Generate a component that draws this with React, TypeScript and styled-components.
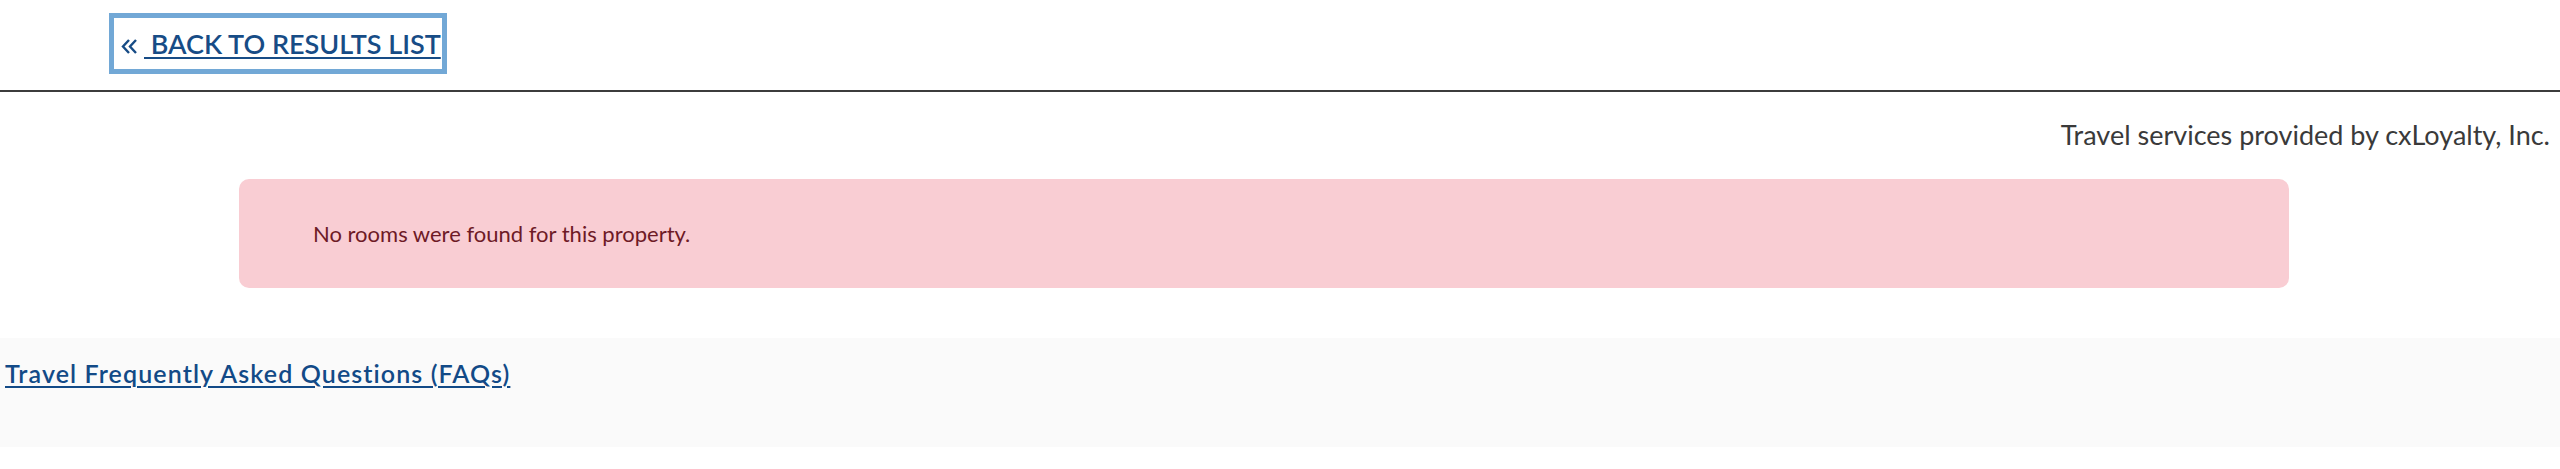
import React from 'react';
import styled, { createGlobalStyle } from 'styled-components';

const GlobalStyle = createGlobalStyle`
  html, body {
    margin: 0;
    padding: 0;
    background: #ffffff;
    font-family: Lato, "Liberation Sans", Arial, sans-serif;
  }
`;

const Page = styled.div`
  width: 2560px;
  min-height: 469px;
  background: #fff;
`;

const TopBar = styled.div`
  height: 92px;
  padding: 13px 0 0 109px;
  box-sizing: border-box;
  border-bottom: 2px solid #3c3c3c;
`;

const BackLink = styled.a`
  display: inline-flex;
  align-items: center;
  height: 61px;
  box-sizing: border-box;
  padding: 0 1px 0 7px;
  border: 5px solid #72a8d6;
  color: #174c86;
  font-size: 27px;
  font-weight: 600;
  letter-spacing: 0;
  text-transform: uppercase;
  text-decoration: none;
  cursor: pointer;
`;

const Chevron = styled.svg`
  width: 17px;
  height: 15px;
  margin: 6px 6px 0 0;
  flex-shrink: 0;
`;

const LinkLabel = styled.span`
  text-decoration: underline;
  text-decoration-thickness: 2px;
  text-underline-offset: 3px;
  white-space: pre;
`;

const Provider = styled.div`
  text-align: right;
  padding: 26px 10px 0 0;
  color: #3a3a3a;
  font-size: 27px;
  line-height: 34px;
`;

const AlertWrap = styled.div`
  padding: 27px 0 0 239px;
`;

const Alert = styled.div`
  width: 2050px;
  height: 109px;
  box-sizing: border-box;
  display: flex;
  align-items: center;
  padding-left: 74px;
  background: #f9cdd3;
  border-radius: 10px;
  color: #6e1a26;
  font-size: 22px;
`;

const FaqSection = styled.div`
  margin-top: 50px;
  height: 109px;
  background: #fafafa;
  padding: 20px 0 0 5px;
  box-sizing: border-box;
`;

const FaqLink = styled.a`
  color: #124a87;
  font-size: 25px;
  font-weight: 600;
  letter-spacing: 1.1px;
  text-decoration: underline;
  text-decoration-thickness: 2px;
  text-underline-offset: 3px;
  cursor: pointer;
`;

export default function App() {
  return (
    <Page>
      <GlobalStyle />
      <TopBar>
        <BackLink>
          <Chevron viewBox="0 0 17 15" fill="none" stroke="currentColor" strokeWidth="2.4">
            <polyline points="8,1 2,7.5 8,14" />
            <polyline points="15,1 9,7.5 15,14" />
          </Chevron>
          <LinkLabel> Back to results list</LinkLabel>
        </BackLink>
      </TopBar>
      <Provider>Travel services provided by cxLoyalty, Inc.</Provider>
      <AlertWrap>
        <Alert>No rooms were found for this property.</Alert>
      </AlertWrap>
      <FaqSection>
        <FaqLink>Travel Frequently Asked Questions (FAQs)</FaqLink>
      </FaqSection>
    </Page>
  );
}
